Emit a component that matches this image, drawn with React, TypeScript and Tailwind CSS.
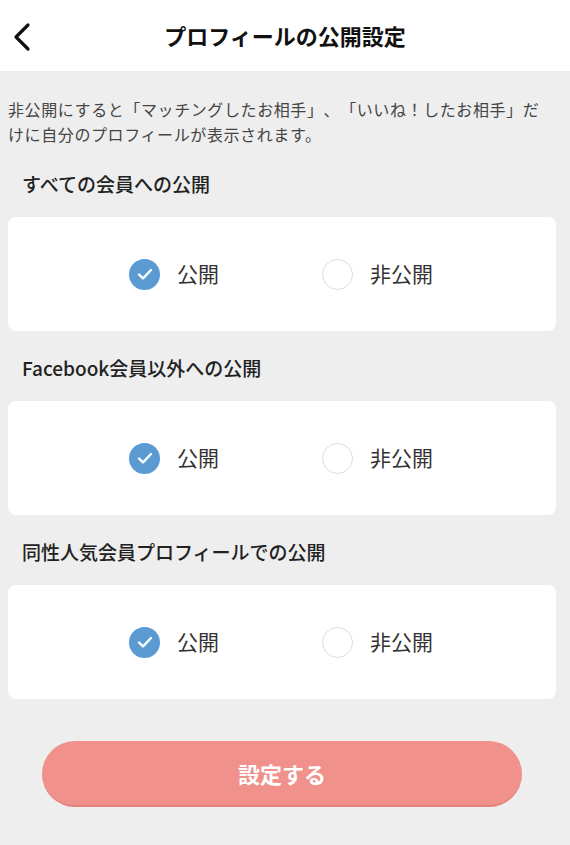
import React, { useState } from "react";

type Choice = "public" | "private";

const sections = [
  { key: "all", title: "すべての会員への公開" },
  { key: "fb", title: "Facebook会員以外への公開" },
  { key: "same", title: "同性人気会員プロフィールでの公開" },
];

const Radio: React.FC<{ checked: boolean; label: string; onClick: () => void }> = ({
  checked,
  label,
  onClick,
}) => (
  <button onClick={onClick} className="flex items-center gap-[17px]">
    {checked ? (
      <span className="flex h-[31px] w-[31px] items-center justify-center rounded-full bg-[#5b9bd3]">
        <svg width="18" height="18" viewBox="0 0 18 18" fill="none">
          <path d="M3 9.5l4 3.8L15 5" stroke="white" strokeWidth="2.4" strokeLinecap="round" strokeLinejoin="round" />
        </svg>
      </span>
    ) : (
      <span className="h-[31px] w-[31px] rounded-full border border-[#dedede] bg-white" />
    )}
    <span className="text-[21px] text-[#333]">{label}</span>
  </button>
);

export default function App() {
  const [values, setValues] = useState<Record<string, Choice>>({
    all: "public",
    fb: "public",
    same: "public",
  });

  return (
    <div
      className="min-h-[845px] w-[570px] bg-[#eeeeee]"
      style={{ fontFamily: '"Noto Sans CJK JP", "Noto Sans", sans-serif' }}
    >
      <header className="relative flex h-[71px] items-center justify-center bg-white">
        <button className="absolute left-[10px] top-[22px]">
          <svg width="24" height="30" viewBox="0 0 24 30" fill="none">
            <path d="M18 3L6 15l12 12" stroke="#111" strokeWidth="3.2" strokeLinecap="round" strokeLinejoin="round" />
          </svg>
        </button>
        <h1 className="text-[22px] font-bold text-[#111]">プロフィールの公開設定</h1>
      </header>

      <p className="pl-[8px] pr-[22px] pt-[26px] text-[16px] leading-[25px] tracking-[0.6px] text-[#444] [text-spacing-trim:space-all]">
        非公開にすると「マッチングしたお相手」、「いいね！したお相手」だけに自分のプロフィールが表示されます。
      </p>

      <div className="mt-[24px] flex flex-col gap-[24px]">
        {sections.map((s) => (
          <section key={s.key}>
            <h2 className="px-[22px] text-[19px] font-medium leading-[26px] text-[#222]">{s.title}</h2>
            <div className="ml-[8px] mr-[14px] mt-[20px] flex h-[114px] items-center rounded-[8px] bg-white pl-[121px]">
              <Radio
                checked={values[s.key] === "public"}
                label="公開"
                onClick={() => setValues((v) => ({ ...v, [s.key]: "public" }))}
              />
              <div className="ml-[103px]">
                <Radio
                  checked={values[s.key] === "private"}
                  label="非公開"
                  onClick={() => setValues((v) => ({ ...v, [s.key]: "private" }))}
                />
              </div>
            </div>
          </section>
        ))}
      </div>

      <div className="pl-[42px] pt-[42px]">
        <button className="h-[66px] w-[480px] rounded-full border-b-2 border-[#e5807a] bg-[#f0918b] text-[22px] font-bold text-white">
          設定する
        </button>
      </div>
    </div>
  );
}
